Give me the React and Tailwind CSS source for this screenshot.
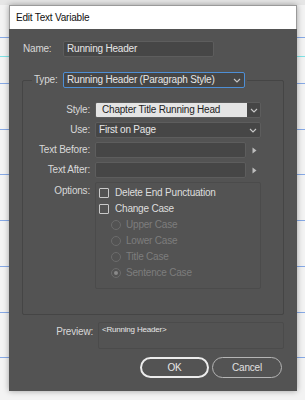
import React from 'react';

const guides = [
  { y: 37, color: 'bg-[#86a9e6]' },
  { y: 56, color: 'bg-[#7fe3e6]' },
  { y: 83, color: 'bg-[#86a9e6]' },
  { y: 129, color: 'bg-[#86a9e6]' },
  { y: 174, color: 'bg-[#86a9e6]' },
  { y: 220, color: 'bg-[#86a9e6]' },
  { y: 266, color: 'bg-[#86a9e6]' },
  { y: 312, color: 'bg-[#86a9e6]' },
  { y: 357, color: 'bg-[#86a9e6]' },
];

const field = 'h-[16px] bg-[#464646] border border-[#5d5d5d] rounded-[2px]';

const Chevron = ({ color = '#c8c8c8' }) => (
  <svg width="8" height="5" viewBox="0 0 8 5" fill="none">
    <path d="M1 1l3 3 3-3" stroke={color} strokeWidth="1.1" />
  </svg>
);

const Arrow = () => (
  <svg width="5" height="7" viewBox="0 0 5 7">
    <path d="M0.5 0.5L4.5 3.5L0.5 6.5Z" fill="#bdbdbd" />
  </svg>
);

const Checkbox = ({ label }) => (
  <div className="h-[16px] flex items-center gap-[6px]">
    <span className="w-[10px] h-[10px] border border-[#c9c9c9] rounded-[1px]" />
    <span className="text-[#dedede]">{label}</span>
  </div>
);

const Radio = ({ label, checked }) => (
  <div className="h-[16px] flex items-center gap-[5px] pl-[12px]">
    <span className="w-[10px] h-[10px] rounded-full border border-[#6c6c6c] flex items-center justify-center">
      {checked && <span className="w-[4px] h-[4px] rounded-full bg-[#8a8a8a]" />}
    </span>
    <span className="text-[#7d7d7d]">{label}</span>
  </div>
);

const Row = ({ label, children }) => (
  <div className="flex items-center h-[16px]">
    <span className="w-[67px] text-right text-[#d8d8d8]">{label}</span>
    <div className="ml-[5px] flex items-center">{children}</div>
  </div>
);

export default function App() {
  return (
    <div
      className="relative w-[305px] h-[400px] overflow-hidden bg-[#f3f3f3] text-[10px] leading-[14px] tracking-[-0.2px]"
      style={{ fontFamily: '"Liberation Sans", Arial, sans-serif' }}
    >
      <div className="absolute inset-x-0 top-0 h-[5px] bg-[#e6e6e6]" />
      {guides.map(g => (
        <div key={g.y} className={`absolute left-0 right-0 h-[1px] ${g.color}`} style={{ top: g.y }} />
      ))}

      <div className="relative ml-[9px] mt-[5px] w-[288px] shadow-[0_0_6px_rgba(0,0,0,0.35)]">
        <div className="h-[24px] bg-white border border-b-0 border-[#9a9a9a] flex items-center pl-[6px] text-[#111] text-[10px]">
          Edit Text Variable
        </div>

        <div className="bg-[#535353] pt-[12px] pb-[13px]">
          <div className="flex items-center pl-[14px]">
            <span className="w-[40px] text-[#d8d8d8]">Name:</span>
            <div className={`${field} w-[151px] flex items-center pl-[3px] text-[#e6e6e6]`}>Running Header</div>
          </div>

          <fieldset className="ml-[13px] mt-[15px] w-[262px] border border-[#454545] rounded-[2px] pt-[14px] pb-[25px]">
            <legend className="ml-[9px] px-[2px] flex items-center">
              <span className="w-[29px] text-[#d8d8d8]">Type:</span>
              <div className="h-[16px] w-[182px] bg-[#464646] border border-[#4e8fd6] rounded-[2px] flex items-center justify-between pl-[3px] pr-[3px] text-[#e6e6e6]">
                <span>Running Header (Paragraph Style)</span>
                <Chevron />
              </div>
            </legend>

            <div className="flex flex-col gap-[4px]">
              <Row label="Style:">
                <div className="h-[16px] w-[166px] flex border border-[#5d5d5d] rounded-[2px] overflow-hidden">
                  <div className="flex-1 bg-[#e4e4e4] text-[#1e1e1e] flex items-center pl-[6px]">Chapter Title Running Head</div>
                  <div className="w-[13px] bg-[#464646] flex items-center justify-center"><Chevron /></div>
                </div>
              </Row>
              <Row label="Use:">
                <div className={`${field} w-[166px] flex items-center justify-between pl-[3px] pr-[3px] text-[#e6e6e6]`}>
                  <span>First on Page</span>
                  <Chevron />
                </div>
              </Row>
              <Row label="Text Before:">
                <div className={`${field} w-[151px]`} />
                <span className="ml-[6px]"><Arrow /></span>
              </Row>
              <Row label="Text After:">
                <div className={`${field} w-[151px]`} />
                <span className="ml-[6px]"><Arrow /></span>
              </Row>
              <div className="flex items-start">
                <span className="w-[67px] text-right text-[#d8d8d8] mt-[2px]">Options:</span>
                <div className="ml-[5px] w-[166px] h-[107px] border border-[#4b4b4b] rounded-[2px] pt-[2px] pl-[3px]">
                  <Checkbox label="Delete End Punctuation" />
                  <Checkbox label="Change Case" />
                  <Radio label="Upper Case" />
                  <Radio label="Lower Case" />
                  <Radio label="Title Case" />
                  <Radio label="Sentence Case" checked />
                </div>
              </div>
            </div>
          </fieldset>

          <div className="flex items-start mt-[7px]">
            <span className="w-[84px] text-right text-[#d8d8d8] mt-[3px]">Preview:</span>
            <div className="ml-[5px] w-[186px] h-[27px] border border-[#4b4b4b] rounded-[2px] pl-[3px] pt-[1px] text-[8px] leading-[12px] text-[#e6e6e6]">
              &lt;Running Header&gt;
            </div>
          </div>

          <div className="flex justify-end gap-[3px] pr-[15px] mt-[8px]">
            <button className="w-[69px] h-[21px] rounded-full border-2 border-[#ececec] text-[#e6e6e6] text-[10px]">OK</button>
            <button className="w-[70px] h-[21px] rounded-full border border-[#b5b5b5] text-[#e0e0e0] text-[10px]">Cancel</button>
          </div>
        </div>
      </div>
    </div>
  );
}
